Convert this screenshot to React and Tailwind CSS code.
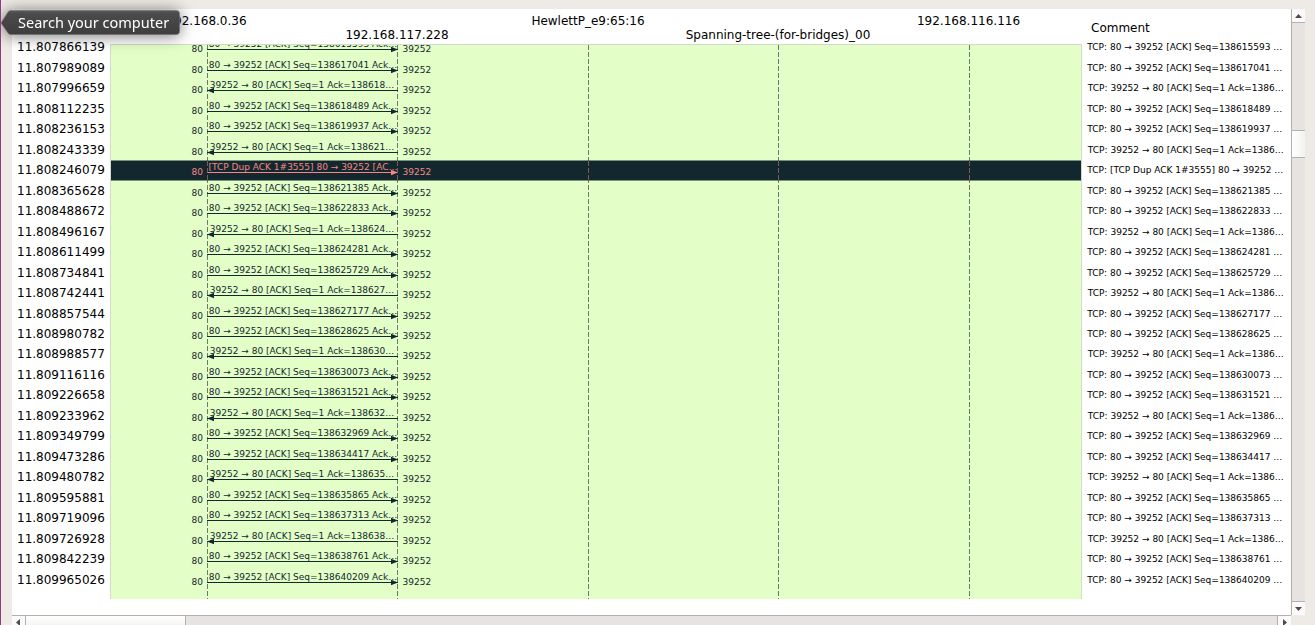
const rows = [
  ['11.807866139', 'd', '138615593'],
  ['11.807989089', 'd', '138617041'],
  ['11.807996659', 'a', '138618'],
  ['11.808112235', 'd', '138618489'],
  ['11.808236153', 'd', '138619937'],
  ['11.808243339', 'a', '138621'],
  ['11.808246079', 'x', ''],
  ['11.808365628', 'd', '138621385'],
  ['11.808488672', 'd', '138622833'],
  ['11.808496167', 'a', '138624'],
  ['11.808611499', 'd', '138624281'],
  ['11.808734841', 'd', '138625729'],
  ['11.808742441', 'a', '138627'],
  ['11.808857544', 'd', '138627177'],
  ['11.808980782', 'd', '138628625'],
  ['11.808988577', 'a', '138630'],
  ['11.809116116', 'd', '138630073'],
  ['11.809226658', 'd', '138631521'],
  ['11.809233962', 'a', '138632'],
  ['11.809349799', 'd', '138632969'],
  ['11.809473286', 'd', '138634417'],
  ['11.809480782', 'a', '138635'],
  ['11.809595881', 'd', '138635865'],
  ['11.809719096', 'd', '138637313'],
  ['11.809726928', 'a', '138638'],
  ['11.809842239', 'd', '138638761'],
  ['11.809965026', 'd', '138640209'],
];

// Rows are 20.5px apart on average, kept on whole pixels.
const rowHeight = (i) => ((i % 2 === 0) === i < 14 ? 'h-[21px]' : 'h-[20px]');

function label([, kind, n]) {
  if (kind === 'd') return `80 → 39252 [ACK] Seq=${n} Ack…`;
  if (kind === 'a') return `39252 → 80 [ACK] Seq=1 Ack=${n}…`;
  return '[TCP Dup ACK 1#3555] 80 → 39252 [AC…';
}

function comment([, kind, n]) {
  if (kind === 'd') return `TCP: 80 → 39252 [ACK] Seq=${n} …`;
  if (kind === 'a') return 'TCP: 39252 → 80 [ACK] Seq=1 Ack=1386…';
  return 'TCP: [TCP Dup ACK 1#3555] 80 → 39252 …';
}

function Arrow({ left }) {
  return (
    <svg className="block" width="192" height="7" fill="currentColor">
      <rect x="0" y="3" width="191" height="1" />
      <path d={left ? 'M0 3.5L7 0.800V6.200Z' : 'M191 3.5L184 0.800V6.200Z'} />
    </svg>
  );
}

function FlowRow({ row, i }) {
  const dup = row[1] === 'x';
  return (
    <div
      className={`flex shrink-0 text-[9px] leading-[11px] ${rowHeight(i)} ${
        dup
          ? '-mt-px mb-px border-y border-[#7a937e] bg-[#12272e] text-[#f78787]'
          : 'text-[#12272e]'
      }`}
    >
      <div className="w-[92px] pt-[6px] text-right">80</div>
      <div className="ml-[4px] flex w-[192px] flex-col items-center">
        <div className={`h-[8px] leading-[13px] ${row[1] === 'a' ? 'pr-[2px]' : ''}`}>
          {label(row)}
        </div>
        <Arrow left={row[1] === 'a'} />
      </div>
      <div className="ml-[3.5px] pt-[6px]">39252</div>
    </div>
  );
}

function Lifelines() {
  return (
    <svg className="pointer-events-none absolute inset-0" width="971" height="554">
      {[96.5, 286.5, 477.5, 667.5, 858.5].map((x) => (
        <g key={x} fill="none" strokeDasharray="5 2">
          <path d={`M${x} 0V554`} stroke="#12272e" strokeOpacity="0.6" />
          <path d={`M${x} 116V135`} stroke="#f78787" strokeOpacity="0.5" />
        </g>
      ))}
    </svg>
  );
}

function Tooltip() {
  return (
    <div className="absolute top-[10px] -left-px drop-shadow-[0_1px_8px_rgba(0,0,0,0.55)]">
      <svg className="block" width="181" height="26">
        <defs>
          <linearGradient id="tip" x1="0" y1="0" x2="0" y2="1">
            <stop offset="0" stopColor="#5b5b5b" />
            <stop offset="0.12" stopColor="#4b4b4b" />
            <stop offset="1" stopColor="#3e3e3e" />
          </linearGradient>
        </defs>
        <path
          d="M1 13L8 2Q9 .5 11 .5H176Q179.500 .5 179.500 3.5V21.500Q179.500 24.500 176 24.500H11Q9 24.500 8 23Z"
          fill="url(#tip)"
          stroke="#737373"
          strokeOpacity=".65"
        />
      </svg>
      <div className="absolute top-[2px] left-[18px] font-['Noto_Sans','Open_Sans',sans-serif] text-[14.500px] leading-[21px] whitespace-nowrap text-white">
        Search your computer
      </div>
    </div>
  );
}

function Triangle({ d }) {
  return (
    <svg width="7" height="7" fill="#4c4c4c">
      <path d={d} />
    </svg>
  );
}

function VerticalScrollbar() {
  return (
    <div className="flex w-[14px] flex-col border-l border-[#b5b0ad] bg-[#e7e3e0]">
      <div className="flex h-[14px] items-center justify-center border-b border-[#b5b0ad] bg-[#fafafa]">
        <Triangle d="M0 6L3.500 2L7 6Z" />
      </div>
      <div className="mt-[107px] h-[28px] border-y border-[#b5b0ad] bg-linear-to-r from-white to-[#f3f2f1]" />
      <div className="mt-auto flex h-[14px] items-center justify-center border-t border-[#b5b0ad] bg-[#fafafa]">
        <Triangle d="M0 2H7L3.500 6Z" />
      </div>
    </div>
  );
}

function HorizontalScrollbar() {
  return (
    <div className="flex h-[10px] w-[1279px] border-t border-[#b5b0ad] bg-[#e7e3e0]">
      <div className="flex w-[14px] justify-center border-r border-[#b5b0ad] bg-[#fafafa] pt-[3px]">
        <Triangle d="M5 0L1 3.500L5 7Z" />
      </div>
      <div className="w-[160px] border-r border-[#b5b0ad] bg-linear-to-b from-white to-[#f5f4f3]" />
      <div className="ml-auto flex w-[14px] justify-center border-l border-[#b5b0ad] bg-[#fafafa] pt-[3px]">
        <Triangle d="M2 0L6 3.500L2 7Z" />
      </div>
    </div>
  );
}

export default function App() {
  return (
    <div className="relative flex h-[625px] w-[1315px] flex-col overflow-hidden border-l border-[#8c3c82] bg-[#eeebe6] pt-[9px] pl-[11px] font-['DejaVu_Sans',sans-serif] whitespace-nowrap text-black">
      <div className="flex h-[606px] w-[1293px]">
        <div className="flex w-[1279px] bg-white">
          <div className="w-[98px] pt-[28px] pl-[5px] text-[12px] leading-[20px]">
            {rows.map((row, i) => (
              <div key={row[0]} className={rowHeight(i)}>{row[0]}</div>
            ))}
          </div>
          <div className="flex w-[972px] flex-col">
            <div className="flex h-[35px] text-[12px] leading-[14px]">
              <div className="w-[193px] pt-[5px] text-center">192.168.0.36</div>
              <div className="w-[188px] pt-[19px] text-center">192.168.117.228</div>
              <div className="w-[194px] pt-[5px] text-center">HewlettP_e9:65:16</div>
              <div className="w-[186px] pt-[19px] text-center">Spanning-tree-(for-bridges)_00</div>
              <div className="w-[195px] pt-[5px] text-center">192.168.116.116</div>
            </div>
            <div className="relative flex h-[555px] flex-col overflow-hidden border-x border-t border-[#d3dac9] bg-[#e3ffc7]">
              <div className="-mt-[7px] flex flex-col">
                {rows.map((row, i) => <FlowRow key={row[0]} row={row} i={i} />)}
              </div>
              <Lifelines />
            </div>
          </div>
          <div className="pl-[5px]">
            <div className="h-[32px] pt-[11px] pl-[4px] text-[12px] leading-[16px]">Comment</div>
            <div className="text-[9.03px] leading-[12px]">
              {rows.map((row, i) => (
                <div key={row[0]} className={`${rowHeight(i)} ${row[1] === 'a' ? 'pl-[0.8px]' : 'pl-[0.3px]'}`}>
                  {comment(row)}
                </div>
              ))}
            </div>
          </div>
        </div>
        <VerticalScrollbar />
      </div>
      <HorizontalScrollbar />
      <Tooltip />
    </div>
  );
}
